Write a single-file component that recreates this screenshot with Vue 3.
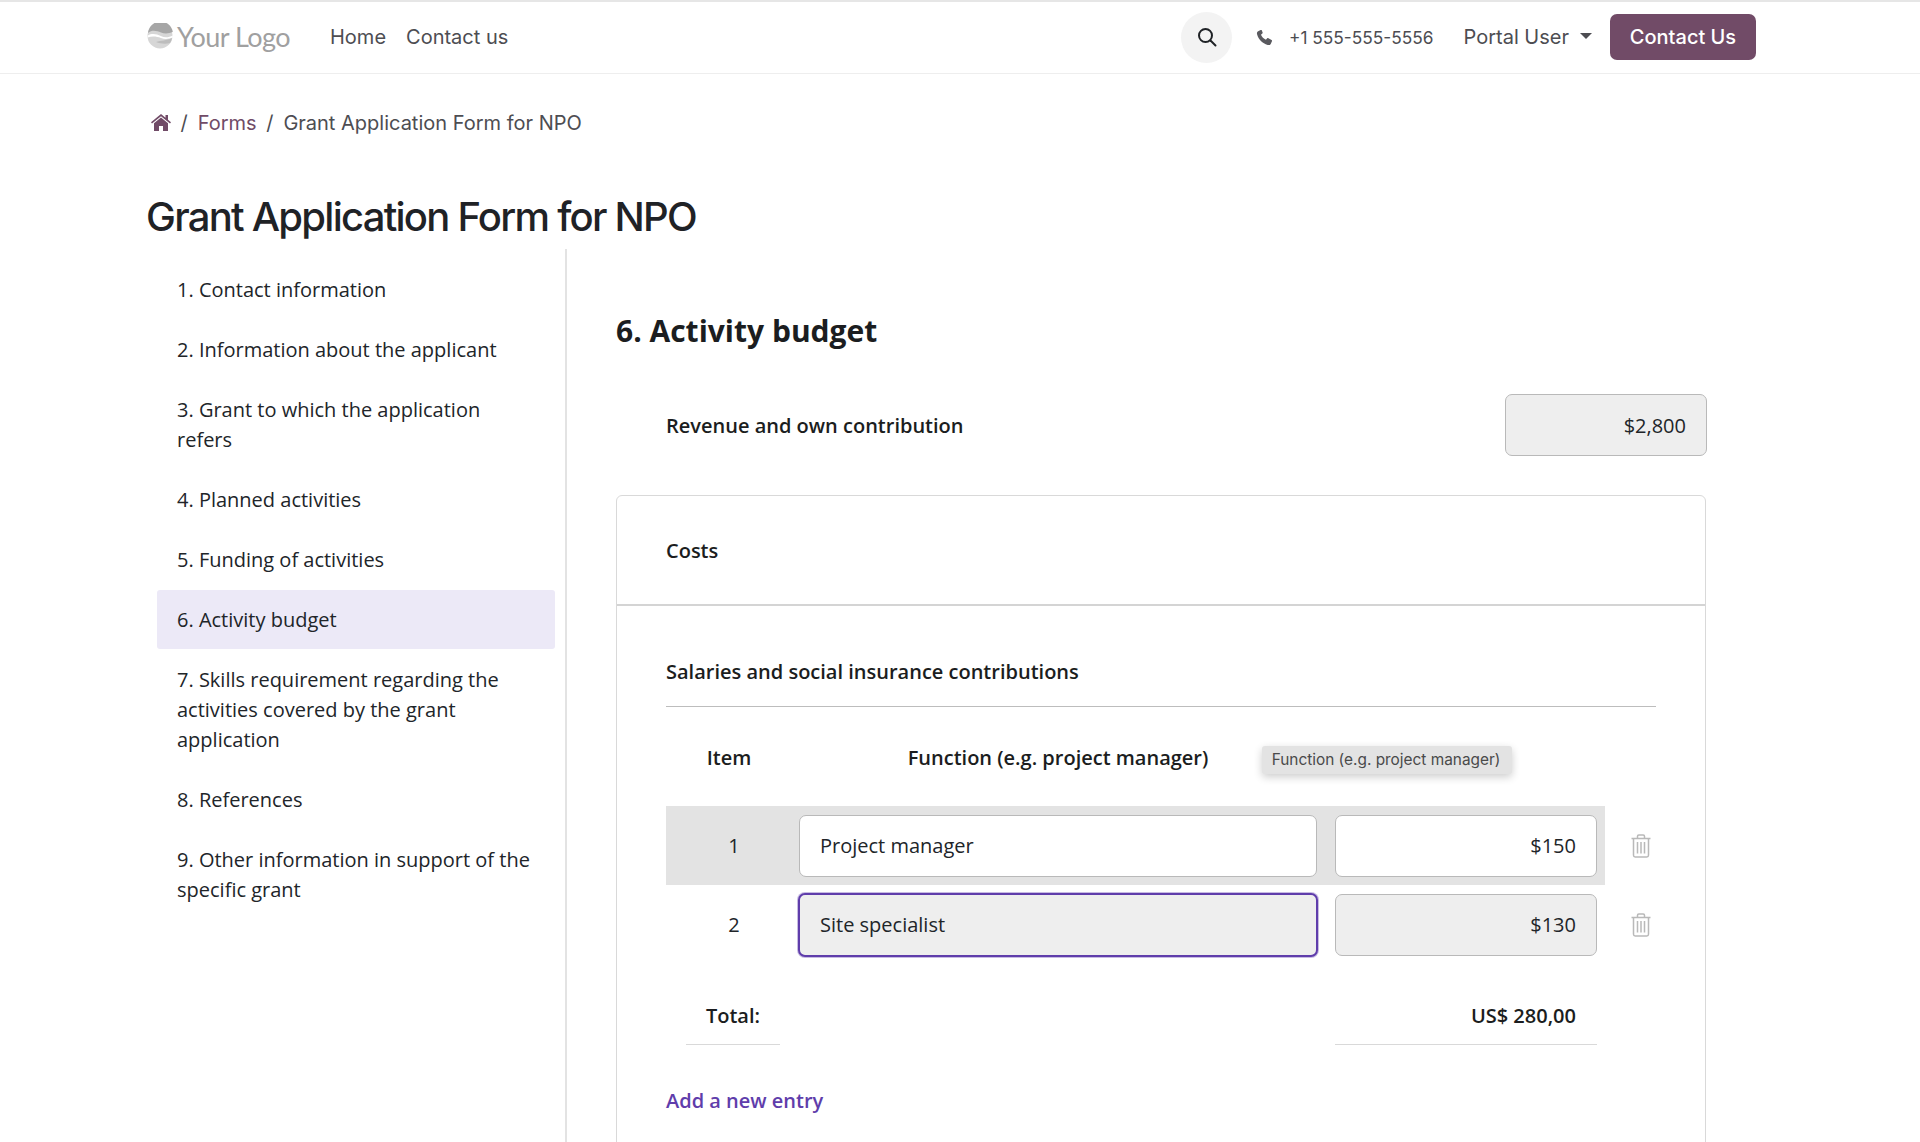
<script setup>
import { ref } from 'vue'

const sections = ref([
  { label: '1. Contact information' },
  { label: '2. Information about the applicant' },
  { label: '3. Grant to which the application refers' },
  { label: '4. Planned activities' },
  { label: '5. Funding of activities' },
  { label: '6. Activity budget', active: true },
  { label: '7. Skills requirement regarding the activities covered by the grant application' },
  { label: '8. References' },
  { label: '9. Other information in support of the specific grant' },
])

const rows = ref([
  { id: 1, fn: 'Project manager', cost: '$150', hover: true },
  { id: 2, fn: 'Site specialist', cost: '$130', focus: true },
])
</script>

<template>
  <div class="page">
    <header class="topbar">
      <div class="logo">
        <svg class="logo-mark" width="26" height="26" viewBox="0 0 26 26">
          <circle cx="13" cy="13" r="12.5" fill="#d6d6d6" />
          <path d="M1 10C5 6.500 10 8 14 9.500s8 1 11.800-.5A12.500 12.500 0 0 0 1 10z" fill="#a6a6a6" />
          <path d="M.8 12.500c4-2.500 9-1.500 13 .5s8 1.500 12-.5l.1 2c-4 1.500-8 2-12 .5S5 13 .6 14.500z" fill="#fff" />
          <path d="M9 19c5-2 10-1 16-4a12.500 12.500 0 0 1-2 5c-5 1.500-10 .5-14-1z" fill="#bdbdbd" />
        </svg>
        <span class="logo-text">Your Logo</span>
      </div>
      <nav class="nav">
        <a>Home</a>
        <a>Contact us</a>
      </nav>
      <div class="top-right">
        <span class="search">
          <svg width="22" height="22" viewBox="0 0 22 22" fill="none" stroke="#1f2226" stroke-width="2">
            <circle cx="9.500" cy="9.500" r="6.500" />
            <path d="M14.500 14.500l5 5" stroke-linecap="round" />
          </svg>
        </span>
        <span class="phone">
          <svg width="17" height="17" viewBox="0 0 24 24" fill="#5a5a5f">
            <path d="M6.600 1.500 3 3.200C1.500 4 1 5.500 1.500 7.500c2 7.500 7.500 13 15 15 2 .5 3.500 0 4.300-1.500l1.700-3.600c.3-.7.100-1.300-.5-1.700l-4.500-2.700c-.6-.4-1.200-.3-1.700.2l-1.800 2c-3.200-1.300-5.700-3.800-7-7l2-1.800c.5-.5.6-1.100.2-1.700L8.300 2c-.4-.6-1-.8-1.700-.5z" />
          </svg>
          <span>+1 555-555-5556</span>
        </span>
        <span class="user">Portal User<i class="caret"></i></span>
        <button class="contact-btn">Contact Us</button>
      </div>
    </header>

    <div class="crumbs">
      <svg width="20" height="17" viewBox="0 0 20 17" fill="#714b67">
        <path d="M10 0 0 8.300l1 1.200L10 2.200l9 7.300 1-1.200-3-2.500V1h-2.500v2.800z" />
        <path d="M10 3.600 3 9.300V17h5v-5h4v5h5V9.300z" />
      </svg>
      <span class="sep">/</span>
      <a>Forms</a>
      <span class="sep">/</span>
      <span>Grant Application Form for NPO</span>
    </div>

    <h1 class="title">Grant Application Form for NPO</h1>

    <div class="layout">
      <aside class="side">
        <div
          v-for="s in sections"
          :key="s.label"
          class="side-item"
          :class="{ active: s.active }">
          {{ s.label }}
        </div>
      </aside>

      <main class="content">
        <h2 class="heading">6. Activity budget</h2>

        <div class="revenue">
          <span class="strong">Revenue and own contribution</span>
          <div class="field readonly right revenue-field">$2,800</div>
        </div>

        <section class="card">
          <div class="card-head strong">Costs</div>
          <div class="card-body">
            <div class="sub-title strong">Salaries and social insurance contributions</div>

            <div class="grid-row head strong">
              <span class="col-item">Item</span>
              <span class="col-fn">Function (e.g. project manager)</span>
              <span class="tip">Function (e.g. project manager)</span>
            </div>

            <div v-for="r in rows" :key="r.id" class="line">
              <div class="grid-row cells" :class="{ hover: r.hover }">
                <span class="col-item">{{ r.id }}</span>
                <div class="field col-fn" :class="{ focus: r.focus, readonly: !r.hover }">{{ r.fn }}</div>
                <div class="field right col-cost" :class="{ readonly: !r.hover }">{{ r.cost }}</div>
              </div>
              <svg class="trash" width="20" height="24" viewBox="0 0 20 24" fill="none" stroke="#b9b9b9" stroke-width="1.500">
                <path d="M0.500 4.500h19M6.500 4.500V2.200C6.500 1.300 7 1 7.800 1h4.400c.8 0 1.300.3 1.300 1.200v2.300" />
                <path d="M2.500 4.500v16.800c0 1 .6 1.700 1.700 1.700h11.600c1.100 0 1.700-.7 1.700-1.700V4.500" />
                <path d="M6.500 8v11.500M10 8v11.500M13.500 8v11.500" />
              </svg>
            </div>

            <div class="grid-row totals strong">
              <span class="col-item total-cell">Total:</span>
              <span class="col-fn"></span>
              <span class="col-cost total-cell right">US$ 280,00</span>
            </div>

            <a class="add">Add a new entry</a>
          </div>
        </section>
      </main>
    </div>
  </div>
</template>

<style>
html,
body {
  margin: 0;
  background: #fff;
}
</style>

<style scoped>
.page {
  height: 1142px;
  overflow: hidden;
  background: #fff;
  font-family: "Open Sans", sans-serif;
  font-size: 20px;
  color: #212529;
  box-sizing: border-box;
  border-top: 2px solid #e6e6e6;
}

.topbar {
  height: 72px;
  box-sizing: border-box;
  border-bottom: 1px solid #eeeeee;
  padding-left: 147px;
  padding-right: 164px;
  padding-bottom: 1px;
  display: flex;
  align-items: center;
  font-family: Inter, sans-serif;
  color: #4d4d52;
}

.logo {
  display: flex;
  align-items: center;
  width: 183px;
  margin-top: -2px;
}

.logo-mark {
  flex-shrink: 0;
}

.logo-text {
  font-family: Lato, sans-serif;
  font-size: 27px;
  color: #a0a0a0;
  margin-left: 4px;
  letter-spacing: -0.5px;
}

.nav {
  display: flex;
  gap: 20px;
  font-size: 20px;
}

.top-right {
  margin-left: auto;
  display: flex;
  align-items: center;
}

.search {
  width: 51px;
  height: 51px;
  border-radius: 50%;
  background: #f3f3f3;
  display: flex;
  align-items: center;
  justify-content: center;
  margin-right: 24px;
}

.phone {
  display: flex;
  align-items: center;
  gap: 16px;
  font-size: 17.3px;
  margin-right: 30px;
}

.user {
  display: flex;
  align-items: center;
  font-size: 20px;
  margin-right: 18px;
}

.caret {
  width: 0;
  height: 0;
  margin-left: 11px;
  margin-top: -2px;
  border-left: 6px solid transparent;
  border-right: 6px solid transparent;
  border-top: 6px solid #4d4d52;
}

.contact-btn {
  width: 146px;
  height: 46px;
  border: none;
  border-radius: 7px;
  background: #714b67;
  color: #fff;
  font-family: Inter, sans-serif;
  font-size: 20px;
  font-weight: 500;
}

.crumbs {
  display: flex;
  align-items: center;
  padding: 36px 0 0 151px;
  height: 25px;
  font-family: Inter, sans-serif;
  font-size: 20px;
  color: #4d4d52;
}

.crumbs a {
  color: #714b67;
}

.sep {
  margin: 0 10px 0 9.500px;
}

.title {
  margin: 0;
  padding: 58px 0 0 146px;
  font-family: Inter, sans-serif;
  font-size: 40px;
  line-height: 48px;
  font-weight: 500;
  letter-spacing: -1.750px;
  color: #1f2226;
}

.layout {
  display: flex;
  margin-left: 147px;
  margin-top: 8px;
}

.side {
  width: 420px;
  flex-shrink: 0;
  box-sizing: border-box;
  padding: 12px 10px 0;
  border-right: 2px solid #e3e3e3;
  height: 900px;
}

.side-item {
  padding: 14px 20px;
  margin-bottom: 2px;
  line-height: 30px;
  border-radius: 3px;
}

.side-item.active {
  background: #ece9f7;
  margin-top: -1px;
  padding-top: 15px;
}

.content {
  width: 1090px;
  margin-left: 49px;
  flex-shrink: 0;
}

.heading {
  margin: 0;
  padding-top: 62px;
  font-size: 30px;
  line-height: 40px;
  font-weight: 700;
  color: #1b1d20;
}

.strong {
  font-weight: 600;
  color: #1b1d20;
}

.revenue {
  margin-top: 43px;
  padding-left: 50px;
  display: flex;
  align-items: center;
  justify-content: space-between;
}

.field {
  box-sizing: border-box;
  height: 62px;
  border: 1px solid #b9b9b9;
  border-radius: 7px;
  background: #fff;
  padding: 0 20px;
  display: flex;
  align-items: center;
  color: #212529;
}

.field.right {
  justify-content: flex-end;
}

.field.readonly {
  background: #eeeeee;
}

.field.focus {
  border: 2px solid #5f3dab;
  box-shadow: 0 0 0 1px rgba(95, 61, 171, 0.35);
  margin: -1px;
  height: 64px;
  width: 520px;
  flex-shrink: 0;
}

.revenue-field {
  width: 202px;
  margin-right: -1px;
}

.card {
  margin-top: 39px;
  width: 1090px;
  box-sizing: border-box;
  border: 1px solid #d9d9d9;
  border-radius: 6px;
  min-height: 700px;
}

.card-head {
  height: 110px;
  box-sizing: border-box;
  padding-left: 49px;
  display: flex;
  align-items: center;
  border-bottom: 2px solid #d4d4d4;
}

.card-body {
  padding: 0 49px;
}

.sub-title {
  height: 101px;
  box-sizing: border-box;
  padding-top: 51px;
  line-height: 30px;
  border-bottom: 1px solid #bdbdbd;
}

.grid-row {
  display: flex;
  align-items: center;
  width: 939px;
}

.grid-row.head {
  position: relative;
  height: 99px;
  box-sizing: border-box;
  padding-top: 2px;
}

.col-item {
  width: 133px;
  flex-shrink: 0;
  box-sizing: border-box;
  text-align: center;
}

.head .col-item {
  padding-right: 7px;
}

.cells .col-item {
  padding-left: 3px;
}

.col-fn {
  width: 518px;
  flex-shrink: 0;
  box-sizing: border-box;
}

.head .col-fn {
  text-align: center;
}

.col-cost {
  width: 262px;
  flex-shrink: 0;
  margin-left: 18px;
}

.tip {
  position: absolute;
  left: 596px;
  top: 39px;
  height: 28px;
  width: 250px;
  box-sizing: border-box;
  padding-right: 2px;
  text-align: center;
  line-height: 28px;
  font-family: Inter, sans-serif;
  font-size: 15.4px;
  font-weight: 400;
  color: #4a4a4a;
  background: #e3e3e3;
  border-radius: 3px;
  box-shadow: 0 3px 8px rgba(0, 0, 0, 0.2);
}

.line {
  display: flex;
  align-items: center;
}

.cells {
  height: 79px;
}

.cells.hover {
  background: #e3e3e3;
}

.trash {
  margin-left: 26px;
}

.totals {
  margin-top: 23px;
  height: 58px;
}

.total-cell {
  height: 58px;
  line-height: 58px;
  border-bottom: 1px solid #d9d9d9;
  box-sizing: border-box;
}

.totals .col-item {
  width: 94px;
  margin: 0 20px;
}

.totals .col-cost {
  padding-right: 21px;
  margin-left: 17px;
}

.right {
  text-align: right;
}

.add {
  display: block;
  margin-top: 42px;
  color: #5f3dab;
  font-weight: 600;
}
</style>
